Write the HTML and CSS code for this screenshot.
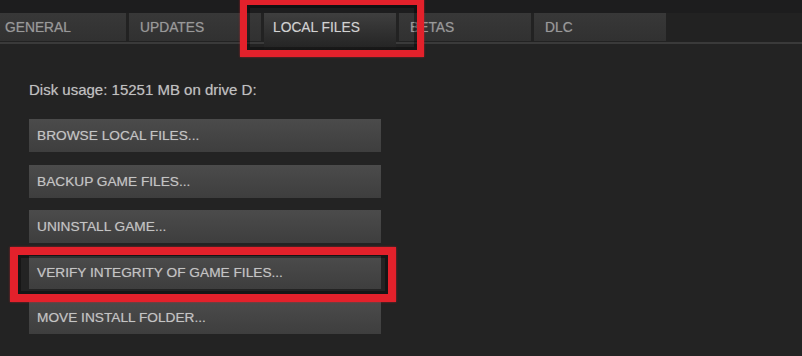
FILE: index.html
```html
<!DOCTYPE html>
<html>
<head>
<meta charset="utf-8">
<link rel="stylesheet" href="styles.css">
</head>
<body>
<div class="window">
  <div class="topstrip"></div>
  <div class="tabstrip">
    <div class="tab">GENERAL</div>
    <div class="tab">UPDATES</div>
    <div class="tab active">LOCAL FILES</div>
    <div class="tab">BETAS</div>
    <div class="tab">DLC</div>
  </div>
  <div class="content">
    <div class="disk">Disk usage: 15251 MB on drive D:</div>
    <div class="buttons">
      <div class="btn">BROWSE LOCAL FILES...</div>
      <div class="btn">BACKUP GAME FILES...</div>
      <div class="btn">UNINSTALL GAME...</div>
      <div class="btn">VERIFY INTEGRITY OF GAME FILES...</div>
      <div class="btn">MOVE INSTALL FOLDER...</div>
    </div>
  </div>
  <div class="highlight hl-tab"></div>
  <div class="highlight hl-verify"></div>
</div>
</body>
</html>
```
FILE: styles.css
```css
html, body {
  margin: 0;
  padding: 0;
  background: #232323;
}
.window {
  position: relative;
  width: 802px;
  height: 356px;
  overflow: hidden;
  background: #232323;
  font-family: "Liberation Sans", Arial, sans-serif;
}
.topstrip {
  height: 13px;
  background: #1d1d1e;
}
.tabstrip {
  display: flex;
  align-items: flex-start;
  gap: 3px;
  height: 28px;
  padding-bottom: 1px;
  border-bottom: 2px solid #3a3a3a;
  background: #222222;
  margin-left: -6px;
}
.tab {
  width: 132px;
  height: 28px;
  flex: none;
  box-sizing: border-box;
  padding-left: 11px;
  display: flex;
  align-items: center;
  background: linear-gradient(#383838, #313131);
  color: #999999;
  font-size: 13.8px;
  text-shadow: 0 0 1px rgba(160, 160, 160, 0.5);
}
.tab.active {
  position: relative;
  height: 37px;
  padding-left: 9px;
  padding-bottom: 9px;
  background: linear-gradient(#3f3f3f 0%, #2e2e2e 60%, #232323 100%);
  color: #d2d2d2;
  z-index: 1;
}
.content {
  padding-left: 29px;
}
.disk {
  margin-top: 37px;
  font-size: 15px;
  line-height: 18px;
  color: #c0c0c0;
  text-shadow: 0 0 1px rgba(190, 190, 190, 0.5);
}
.buttons {
  margin-top: 20px;
  display: flex;
  flex-direction: column;
  gap: 12.5px;
}
.btn {
  width: 352px;
  height: 33px;
  box-sizing: border-box;
  padding-left: 8px;
  display: flex;
  align-items: center;
  background: linear-gradient(#4b4b4b, #3e3e3e);
  color: #c4c4c4;
  font-size: 13.7px;
  text-shadow: 0 0 1px rgba(190, 190, 190, 0.5);
}
.highlight {
  position: absolute;
  box-sizing: border-box;
  border: 7px solid #e3212b;
  box-shadow: inset 0 0 0 3px rgba(0, 0, 0, 0.35), 0 0 2px rgba(227, 33, 43, 0.6);
  z-index: 2;
}
.hl-tab {
  left: 240px;
  top: -2px;
  width: 184px;
  height: 59px;
}
.hl-verify {
  left: 10px;
  top: 247px;
  width: 386px;
  height: 55px;
  border-width: 8px;
}
```
